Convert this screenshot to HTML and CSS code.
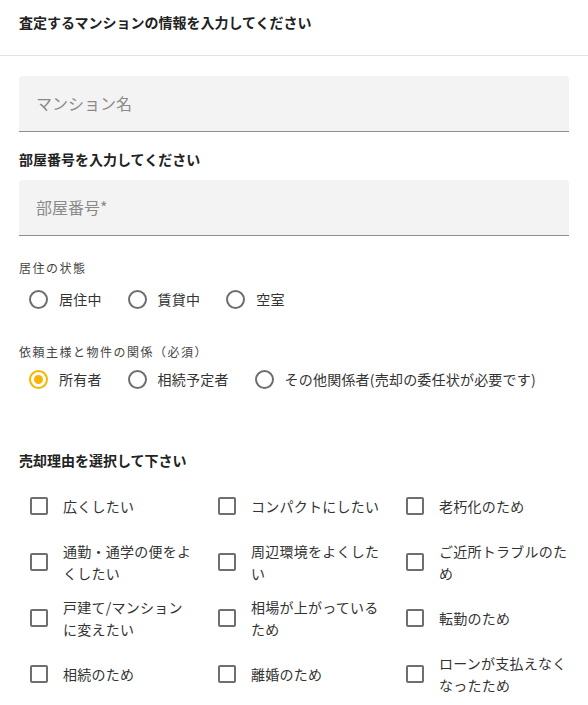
FILE: index.html
```html
<!DOCTYPE html>
<html lang="ja">
<head>
<meta charset="utf-8">
<title>査定フォーム</title>
<link rel="stylesheet" href="styles.css">
</head>
<body>
<header class="page-head">
  <h1 class="page-title">査定するマンションの情報を入力してください</h1>
</header>
<main class="form">
  <div class="field"><span class="placeholder">マンション名</span></div>
  <h2 class="section-title title-room">部屋番号を入力してください</h2>
  <div class="field"><span class="placeholder">部屋番号*</span></div>

  <p class="group-label label-live">居住の状態</p>
  <div class="radio-row row-live">
    <label class="radio"><span class="radio-mark"></span><span class="radio-text">居住中</span></label>
    <label class="radio"><span class="radio-mark"></span><span class="radio-text">賃貸中</span></label>
    <label class="radio"><span class="radio-mark"></span><span class="radio-text">空室</span></label>
  </div>

  <p class="group-label label-rel">依頼主様と物件の関係（必須）</p>
  <div class="radio-row row-rel">
    <label class="radio"><span class="radio-mark is-checked"></span><span class="radio-text">所有者</span></label>
    <label class="radio"><span class="radio-mark"></span><span class="radio-text">相続予定者</span></label>
    <label class="radio"><span class="radio-mark"></span><span class="radio-text">その他関係者(売却の委任状が必要です)</span></label>
  </div>

  <h2 class="section-title title-reason">売却理由を選択して下さい</h2>
  <div class="check-grid">
    <label class="check"><span class="check-box"></span><span class="check-text">広くしたい</span></label>
    <label class="check"><span class="check-box"></span><span class="check-text">コンパクトにしたい</span></label>
    <label class="check"><span class="check-box"></span><span class="check-text">老朽化のため</span></label>
    <label class="check"><span class="check-box"></span><span class="check-text">通勤・通学の便をよくしたい</span></label>
    <label class="check"><span class="check-box"></span><span class="check-text">周辺環境をよくしたい</span></label>
    <label class="check"><span class="check-box"></span><span class="check-text">ご近所トラブルのため</span></label>
    <label class="check"><span class="check-box"></span><span class="check-text">戸建て/マンションに変えたい</span></label>
    <label class="check"><span class="check-box"></span><span class="check-text">相場が上がっているため</span></label>
    <label class="check"><span class="check-box"></span><span class="check-text">転勤のため</span></label>
    <label class="check"><span class="check-box"></span><span class="check-text">相続のため</span></label>
    <label class="check"><span class="check-box"></span><span class="check-text">離婚のため</span></label>
    <label class="check"><span class="check-box"></span><span class="check-text">ローンが支払えなくなったため</span></label>
  </div>
</main>
</body>
</html>
```
FILE: styles.css
```css
* { box-sizing: border-box; }
html, body { margin: 0; padding: 0; background: #fff; }
body {
  font-family: "Noto Sans CJK JP", "Noto Sans", sans-serif;
  color: #333;
  width: 588px;
  overflow: hidden;
}
.page-head {
  height: 56px;
  border-bottom: 1px solid #e2e2e2;
  padding: 12px 19px 0;
}
.page-title {
  margin: 0;
  font-size: 14px;
  line-height: 20px;
  font-weight: 700;
  color: #222;
}
.form {
  padding: 20px 19px 0;
}
.field {
  height: 56px;
  background: #f3f3f3;
  border-radius: 4px 4px 0 0;
  border-bottom: 1px solid #8e8e8e;
  display: flex;
  align-items: center;
  padding: 0 17px 0 17px;
}
.placeholder {
  font-size: 16px;
  color: #8a8a8a;
  line-height: 20px;
  margin-top: -1px;
}
.section-title {
  margin: 0;
  font-size: 14px;
  line-height: 20px;
  font-weight: 700;
  color: #222;
}
.title-room { margin: 17px 0 11px; }
.title-reason { margin-top: 59px; }
.group-label {
  margin: 0;
  font-size: 12px;
  line-height: 18px;
  letter-spacing: 1.5px;
  color: #444;
}
.label-live { margin-top: 23px; }
.label-rel { margin-top: 32px; }
.radio-row {
  display: flex;
  align-items: center;
  height: 24px;
}
.row-live { margin-top: 10px; }
.row-rel { margin-top: 6px; }
.radio {
  display: flex;
  align-items: center;
  gap: 11px;
  padding-left: 10px;
  margin-right: 16px;
}
.radio-mark {
  width: 19px;
  height: 19px;
  border: 2px solid #6e6e6e;
  border-radius: 50%;
  display: flex;
  align-items: center;
  justify-content: center;
  flex: none;
}
.radio-mark.is-checked { border-color: #f6b500; }
.radio-mark.is-checked::after {
  content: "";
  width: 9px;
  height: 9px;
  border-radius: 50%;
  background: #f6b500;
}
.radio-text {
  font-size: 14px;
  line-height: 20px;
  color: #333;
  white-space: nowrap;
  letter-spacing: 0.2px;
}
.check-grid {
  margin-top: 8px;
  display: grid;
  grid-template-columns: repeat(3, 188px);
  grid-auto-rows: 56px;
}
.check {
  display: flex;
  align-items: center;
  padding-left: 11px;
}
.check-box {
  width: 18px;
  height: 18px;
  border: 2px solid #6e6e6e;
  border-radius: 2px;
  flex: none;
  margin-right: 15px;
}
.check-text {
  font-size: 14px;
  line-height: 22px;
  color: #333;
  width: 131px;
  letter-spacing: 0.25px;
}
```
